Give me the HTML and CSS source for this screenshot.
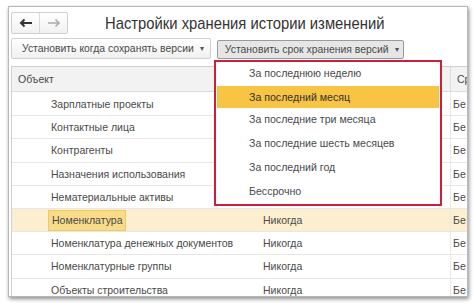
FILE: index.html
```html
<!DOCTYPE html>
<html>
<head>
<meta charset="utf-8">
<link rel="stylesheet" href="styles.css">
</head>
<body>
<div class="win">
  <div class="titlebar">
    <div class="nav">
      <span class="navbtn back"><svg width="14" height="10" viewBox="0 0 14 10"><path d="M13 5H2M5.5 1.5L2 5l3.5 3.5" fill="none" stroke="#333" stroke-width="2"/></svg></span>
      <span class="navbtn fwd"><svg width="14" height="10" viewBox="0 0 14 10"><path d="M1 5h11M8.5 1.5L12 5 8.5 8.5" fill="none" stroke="#aaa" stroke-width="1.6"/></svg></span>
    </div>
    <h1 class="title">Настройки хранения истории изменений</h1>
  </div>
  <div class="toolbar">
    <span class="btn">Установить когда сохранять версии <span class="caret">▾</span></span>
    <span class="btn pressed">Установить срок хранения версий <span class="caret">▾</span></span>
  </div>
  <div class="table">
    <div class="row head"><span class="c1 hc">Объект</span><span class="c2"></span><span class="c3">Ср</span></div>
    <div class="row"><span class="c1">Зарплатные проекты</span><span class="c2"></span><span class="c3">Бе</span></div>
    <div class="row"><span class="c1">Контактные лица</span><span class="c2"></span><span class="c3">Бе</span></div>
    <div class="row"><span class="c1">Контрагенты</span><span class="c2"></span><span class="c3">Бе</span></div>
    <div class="row"><span class="c1">Назначения использования</span><span class="c2"></span><span class="c3">Бе</span></div>
    <div class="row"><span class="c1">Нематериальные активы</span><span class="c2"></span><span class="c3">Бе</span></div>
    <div class="row sel"><span class="c1"><span class="cur">Номенклатура</span></span><span class="c2">Никогда</span><span class="c3">Бе</span></div>
    <div class="row"><span class="c1">Номенклатура денежных документов</span><span class="c2">Никогда</span><span class="c3">Бе</span></div>
    <div class="row"><span class="c1">Номенклатурные группы</span><span class="c2">Никогда</span><span class="c3">Бе</span></div>
    <div class="row"><span class="c1">Объекты строительства</span><span class="c2">Никогда</span><span class="c3">Бе</span></div>
  </div>
  <div class="menu">
    <div class="item">За последнюю неделю</div>
    <div class="item active">За последний месяц</div>
    <div class="item">За последние три месяца</div>
    <div class="item">За последние шесть месяцев</div>
    <div class="item">За последний год</div>
    <div class="item">Бессрочно</div>
  </div>
</div>
</body>
</html>
```
FILE: styles.css
```css
html, body { margin: 0; padding: 0; background: #fff; }
body {
  width: 474px; height: 306px; overflow: hidden;
  font-family: "Liberation Sans", Arial, sans-serif;
  color: #444;
}
.win {
  position: relative;
  margin: 6px 6px 0 8px;
  width: 460px; height: 291px;
  background: #fff;
  border: 1px solid #b8b8b8;
  box-sizing: border-box;
  box-shadow: 1px 2px 4px rgba(0,0,0,0.45);
  overflow: hidden;
  padding: 0 0 0 2px;
}
.titlebar { display: flex; align-items: center; height: 27px; padding-top: 2px; }
.nav {
  display: flex; width: 57px; height: 22px;
  border: 1px solid #cfcfcf; border-radius: 2px;
  background: linear-gradient(#fff, #f1f1f1);
  box-sizing: border-box;
}
.navbtn { flex: 1; display: flex; align-items: center; justify-content: center; }
.navbtn.back { border-right: 1px solid #d8d8d8; }
.title {
  margin: 0 0 0 37px; font-weight: normal; font-size: 14.8px; color: #333;
  white-space: nowrap; transform: scaleY(1.12);
}
.toolbar { display: flex; align-items: center; gap: 6px; height: 24px; }
.btn {
  display: inline-flex; align-items: center; height: 21px; box-sizing: border-box;
  padding: 0 6px 0 10px; font-size: 10.4px; color: #4a4a4a;
  border: 1px solid #d0d0d0; border-radius: 2px;
  background: linear-gradient(#fff, #f0f0f0);
  white-space: nowrap;
}
.btn .caret { font-size: 8px; margin-left: 6px; color: #555; }
.btn.pressed {
  height: 19px; margin-top: 2px;
  background: #e6e6e6; border-color: #9a9a9a; padding: 0 4px 0 7px;
}
.table {
  border: 1px solid #cfcfcf; border-right: none;
  margin-top: 6px;
}
.row {
  display: grid; grid-template-columns: 237px 201px 1fr;
  height: 23.2px; box-sizing: border-box; align-items: center;
  font-size: 10.5px; color: #4a4a4a;
  border-top: 1px solid #e6e6e6;
}
.row.head { height: 25px; background: #f2f2f2; border-top: none; border-bottom: 1px solid #dcdcdc; }
.row.head + .row { border-top: none; }
.row > span { white-space: nowrap; overflow: hidden; height: 100%; display: flex; align-items: center; }
.c1 { padding-left: 39px; }
.c1.hc { padding-left: 6px; }
.c2 { padding-left: 14px; }
.c3 { padding-left: 2px; border-left: 1px solid #e8e8e8; }
.row.head .c3 { padding-left: 6px; border-left-color: #dcdcdc; }
.row.sel { background: #fbefcf; }
.cur {
  margin-left: -3px; padding: 0 3px; height: 21px; display: inline-flex; align-items: center;
  background: #f8dc8a; border: 1px solid #efc862; box-sizing: border-box;
}
.menu {
  position: absolute; left: 205px; top: 53px;
  width: 228px; height: 146px; box-sizing: border-box;
  border: 2px solid #cc1f3a; background: #fff;
}
.item {
  height: 24px; display: flex; align-items: center; box-sizing: border-box;
  padding: 0 0 3px 33px; font-size: 10.6px; color: #4a4a4a; white-space: nowrap;
}
.item.active {
  background: #f7c443; color: #333; height: 22px; margin: 0 1px;
  padding: 0 0 1px 32px;
}
```
